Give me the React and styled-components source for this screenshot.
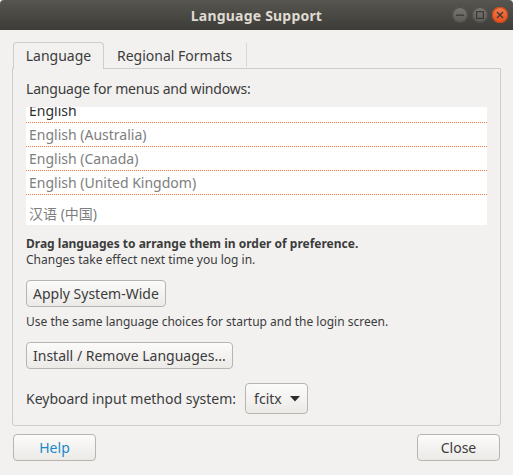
import styled, { createGlobalStyle } from "styled-components";

const GlobalStyle = createGlobalStyle`
  html, body {
    margin: 0;
    padding: 0;
    background: #f2f1f0;
  }
  body {
    font-family: "Noto Sans", "Noto Sans CJK SC", sans-serif;
    color: #3c3c3c;
  }
`;

const Window = styled.div`
  width: 513px;
  height: 475px;
  display: flex;
  flex-direction: column;
  background: #f2f1f0;
  overflow: hidden;
`;

const TitleBar = styled.div`
  height: 30px;
  flex: none;
  position: relative;
  display: flex;
  align-items: center;
  justify-content: center;
  background: linear-gradient(#57554f, #3d3c38);
  border-top-left-radius: 4px;
  border-top-right-radius: 4px;
`;

const Title = styled.span`
  color: #dfdbd2;
  font-weight: bold;
  font-size: 14px;
  letter-spacing: 0.2px;
`;

const Controls = styled.div`
  position: absolute;
  right: 5px;
  top: 7px;
  display: flex;
  gap: 4px;
`;

const Dot = styled.div`
  width: 16px;
  height: 16px;
  border-radius: 50%;
  display: flex;
  align-items: center;
  justify-content: center;
  background: ${(p) =>
    p.$close
      ? "linear-gradient(#f47a4c, #e3511c)"
      : "linear-gradient(#7a7873, #5c5a55)"};
  box-shadow: inset 0 0 0 1px ${(p) => (p.$close ? "#c9461a" : "#4c4a46")};
`;

const Main = styled.div`
  flex: 1;
  display: flex;
  flex-direction: column;
  padding: 12px 12px 0 12px;
`;

const TabStrip = styled.div`
  display: flex;
  align-items: flex-end;
  height: 27px;
  margin-bottom: -1px;
  position: relative;
  z-index: 1;
`;

const Tab = styled.div`
  height: ${(p) => (p.$active ? "27px" : "24px")};
  box-sizing: border-box;
  display: flex;
  align-items: center;
  font-size: 14px;
  ${(p) =>
    p.$active
      ? `
    margin-left: 1px;
    width: 91px;
    justify-content: center;
    border: 1px solid #cfcdc9;
    border-bottom: none;
    border-radius: 4px 4px 0 0;
    background: #f2f1f0;
    padding-bottom: 1px;
  `
      : `
    padding: 0 14px 0 13px;
    margin-bottom: 2px;
    border-right: 1px solid #dad8d4;
  `}
`;

const Panel = styled.div`
  height: 358px;
  box-sizing: border-box;
  border: 1px solid #cfcdc9;
  border-radius: 0 0 3px 3px;
  width: 489px;
  padding: 11px 13px 0 13px;
  display: flex;
  flex-direction: column;
`;

const Label = styled.div`
  font-size: 14px;
  line-height: 18px;
  letter-spacing: ${(p) => p.$tight || "0"};
`;

const List = styled.div`
  margin-top: 9px;
  height: 118px;
  background: #ffffff;
  overflow: hidden;
`;

const ListInner = styled.div`
  margin-top: -8px;
`;

const Row = styled.div`
  box-sizing: border-box;
  padding-left: 3px;
  display: flex;
  align-items: center;
  font-size: 14px;
  color: ${(p) => (p.$first ? "#2e2e2e" : "#7e7e7e")};
  border-bottom: ${(p) => (p.$last ? "none" : "1px dotted #f07641")};
  padding-top: ${(p) => (p.$last ? "5px" : "0")};
  height: ${(p) => (p.$last ? "30px" : "24px")};
`;

const Hint = styled.div`
  font-size: 12px;
  line-height: 16px;
  font-weight: ${(p) => (p.$bold ? "bold" : "normal")};
`;

const Spacer = styled.div`
  height: ${(p) => p.$h}px;
  flex: none;
`;

const Button = styled.button`
  font-family: inherit;
  font-size: 14px;
  color: ${(p) => (p.$link ? "#1a88c9" : "#3c3c3c")};
  height: 27px;
  width: ${(p) => p.$w || "auto"};
  box-sizing: border-box;
  padding: 0 6px;
  border: 1px solid #b8b5b0;
  border-radius: 4px;
  background: linear-gradient(#fbfbfa, #eceae7);
  display: flex;
  align-items: center;
  justify-content: center;
  align-self: flex-start;
`;

const KeyboardRow = styled.div`
  display: flex;
  align-items: center;
  gap: 9px;
  margin-top: 14px;
`;

const Combo = styled(Button)`
  height: 31px;
  width: 63px;
  padding: 0 0 0 8px;
  justify-content: flex-start;
  gap: 8px;
`;

const Footer = styled.div`
  display: flex;
  justify-content: space-between;
  padding: 8px 1px 0 1px;
  width: 487px;
`;

const languages = [
  "English",
  "English (Australia)",
  "English (Canada)",
  "English (United Kingdom)",
  "汉语 (中国)",
];

export default function App() {
  return (
    <Window>
      <GlobalStyle />
      <TitleBar>
        <Title>Language Support</Title>
        <Controls>
          <Dot>
            <svg width="8" height="8" viewBox="0 0 8 8">
              <rect x="0" y="3.5" width="8" height="1.3" fill="#3c3b37" />
            </svg>
          </Dot>
          <Dot>
            <svg width="8" height="8" viewBox="0 0 8 8">
              <rect x="0.6" y="0.6" width="6.8" height="6.8" fill="none" stroke="#3c3b37" strokeWidth="1.2" />
            </svg>
          </Dot>
          <Dot $close>
            <svg width="8" height="8" viewBox="0 0 8 8">
              <path d="M1 1 L7 7 M7 1 L1 7" stroke="#3c3b37" strokeWidth="1.4" />
            </svg>
          </Dot>
        </Controls>
      </TitleBar>
      <Main>
        <TabStrip>
          <Tab $active>Language</Tab>
          <Tab>Regional Formats</Tab>
        </TabStrip>
        <Panel>
          <Label $tight="-0.2px">Language for menus and windows:</Label>
          <List>
            <ListInner>
              {languages.map((l, i) => (
                <Row key={l} $first={i === 0} $last={i === languages.length - 1}>
                  {l}
                </Row>
              ))}
            </ListInner>
          </List>
          <Spacer $h={11} />
          <Hint $bold>Drag languages to arrange them in order of preference.</Hint>
          <Hint>Changes take effect next time you log in.</Hint>
          <Spacer $h={12} />
          <Button>Apply System-Wide</Button>
          <Spacer $h={7} />
          <Hint>Use the same language choices for startup and the login screen.</Hint>
          <Spacer $h={12} />
          <Button>Install / Remove Languages...</Button>
          <KeyboardRow>
            <Label>Keyboard input method system:</Label>
            <Combo>
              fcitx
              <svg width="10" height="6" viewBox="0 0 10 6">
                <path d="M0 0 L10 0 L5 5.5 Z" fill="#2e2e2e" />
              </svg>
            </Combo>
          </KeyboardRow>
        </Panel>
        <Footer>
          <Button $link $w="83px">Help</Button>
          <Button $w="83px">Close</Button>
        </Footer>
      </Main>
    </Window>
  );
}
